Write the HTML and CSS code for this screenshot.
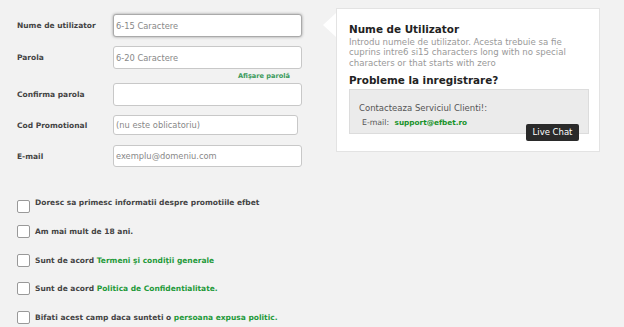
FILE: index.html
```html
<!DOCTYPE html>
<html lang="ro">
<head>
    <meta charset="UTF-8">
    <title>Inregistrare</title>
    <link rel="stylesheet" href="styles.css">
</head>
<body>
<div class="page">
    <div class="form">
        <div class="row">
            <label class="label">Nume de utilizator</label>
            <input class="field focus" type="text" placeholder="6-15 Caractere">
        </div>
        <div class="row">
            <label class="label">Parola</label>
            <input class="field" type="password" placeholder="6-20 Caractere">
        </div>
        <div class="show"><a href="#">Afişare parolă</a></div>
        <div class="row">
            <label class="label">Confirma parola</label>
            <input class="field" type="password">
        </div>
        <div class="row">
            <label class="label">Cod Promotional</label>
            <input class="field small" type="text" placeholder="(nu este oblicatoriu)">
        </div>
        <div class="row">
            <label class="label">E-mail</label>
            <input class="field mail" type="text" placeholder="exemplu@domeniu.com">
        </div>

        <div class="checks">
            <label class="check"><input type="checkbox"><span>Doresc sa primesc informatii despre promotiile efbet</span></label>
            <label class="check"><input type="checkbox"><span>Am mai mult de 18 ani.</span></label>
            <label class="check"><input type="checkbox"><span>Sunt de acord <a href="#">Termeni şi condiţii generale</a></span></label>
            <label class="check"><input type="checkbox"><span>Sunt de acord <a href="#">Politica de Confidentialitate.</a></span></label>
            <label class="check"><input type="checkbox"><span>Bifati acest camp daca sunteti o <a href="#">persoana expusa politic.</a></span></label>
        </div>
    </div>

    <div class="panel">
        <h3>Nume de Utilizator</h3>
        <p class="hint">Introdu numele de utilizator. Acesta trebuie sa fie cuprins intre6 si15 characters long with no special characters or that starts with zero</p>
        <h3 class="problems">Probleme la inregistrare?</h3>
        <div class="contact">
            <p class="contact-title">Contacteaza Serviciul Clienti!:</p>
            <p class="contact-mail">E-mail: <a href="#">support@efbet.ro</a></p>
            <button class="chat">Live Chat</button>
        </div>
    </div>
</div>
</body>
</html>
```

FILE: styles.css
```css
* {
    padding: 0;
    margin: 0;
    box-sizing: border-box;
}

body {
    background: #f2f2f2;
    font-family: "DejaVu Sans", Verdana, sans-serif;
    color: #444;
    overflow: hidden;
}

a {
    color: #1f9a3a;
    text-decoration: none;
}

.page {
    display: flex;
    align-items: flex-start;
}

.form {
    width: 336px;
    padding: 14px 0 0 17px;
}

.row {
    display: flex;
    align-items: center;
    margin-bottom: 9px;
}

.label {
    width: 96px;
    font-size: 7.5px;
    font-weight: bold;
    color: #444;
}

.field {
    width: 189px;
    height: 23px;
    border: 1px solid #c8c8c8;
    border-radius: 3px;
    background: #fff;
    padding: 0 2px;
    font-family: "DejaVu Sans", Verdana, sans-serif;
    font-size: 8.3px;
    color: #555;
    outline: none;
}

.field::placeholder {
    color: #888;
}

.field.focus {
    border-color: #aaa;
    box-shadow: 0 0 3px #999;
}

.field.small {
    width: 185px;
    height: 20px;
    margin-bottom: 1px;
}

.field.mail {
    height: 22px;
}

.show {
    width: 273px;
    margin-top: -8px;
    height: 13px;
    text-align: right;
    font-size: 6.6px;
    line-height: 12px;
}

.show a {
    color: #3b9a5c;
    font-weight: bold;
}

.checks {
    padding-top: 24px;
}

.check {
    display: flex;
    align-items: flex-start;
    height: 28.5px;
    font-size: 7.5px;
    font-weight: bold;
    color: #444;
}

.check:first-child {
    height: 25px;
}

.check input {
    appearance: none;
    width: 13px;
    height: 13px;
    border: 1px solid #999;
    border-radius: 2px;
    background: #fff;
    margin-right: 5px;
    flex-shrink: 0;
}

.check span {
    padding-top: 2px;
}

.check:first-child span {
    padding-top: 0;
    margin-top: -2px;
}

.panel {
    position: relative;
    margin-top: 8px;
    width: 264px;
    height: 144px;
    background: #fff;
    border: 1px solid #e3e3e3;
    padding: 14px 10px 0 12px;
}

.panel::before {
    content: "";
    position: absolute;
    left: -14px;
    top: 4px;
    border-top: 12px solid transparent;
    border-bottom: 12px solid transparent;
    border-right: 13px solid #fff;
}

.panel h3 {
    font-size: 10.4px;
    color: #222;
    line-height: 13px;
}

.hint {
    font-size: 8.6px;
    line-height: 10.3px;
    color: #999;
    margin-top: 1px;
    margin-bottom: 6px;
}

.problems {
    margin-bottom: 2px;
}

.contact {
    position: relative;
    height: 45px;
    background: #ebebeb;
    border: 1px solid #dcdcdc;
    padding: 13px 0 0 9px;
    font-size: 8.5px;
    color: #555;
}

.contact-title {
    margin-bottom: 5px;
}

.contact-mail {
    padding-left: 3px;
    font-size: 7.8px;
}

.contact-mail a {
    font-weight: bold;
    font-size: 7.3px;
    color: #17922a;
    margin-left: 3px;
}

.chat {
    position: absolute;
    right: 9px;
    top: 34px;
    width: 53px;
    height: 17px;
    border: none;
    border-radius: 2px;
    background: #2a2a2a;
    color: #fff;
    font-family: "DejaVu Sans", Verdana, sans-serif;
    font-size: 8.5px;
}
```
